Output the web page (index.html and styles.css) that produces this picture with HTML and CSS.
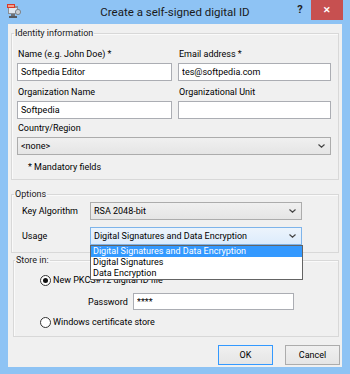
FILE: index.html
```html
<!DOCTYPE html>
<html lang="en">
<head>
    <meta charset="UTF-8">
    <title>Create a self-signed digital ID</title>
    <link rel="stylesheet" href="styles.css">
</head>
<body>
    <div class="window">
        <div class="titlebar">
            <svg class="app-icon" width="14" height="14" viewBox="0 0 14 14">
                <rect x="1" y="2" width="10" height="8" fill="#8a8f96"/>
                <rect x="2" y="4" width="8" height="5" fill="#dfe6ee"/>
                <rect x="0" y="0" width="8" height="4" fill="#d83a2a"/>
                <rect x="1" y="1" width="6" height="2" fill="#f2a08c"/>
                <rect x="4" y="10" width="4" height="2" fill="#6d7178"/>
                <rect x="2" y="12" width="8" height="2" fill="#55595f"/>
                <circle cx="11" cy="8" r="2.6" fill="#c9ced4" stroke="#7d838b" stroke-width="1"/>
            </svg>
            <div class="title">Create a self-signed digital ID</div>
            <div class="help">?</div>
            <div class="close">&#x2715;</div>
        </div>

        <div class="client">
            <fieldset class="group identity">
                <legend>Identity information</legend>
                <div class="group-body">
                    <div class="grid">
                        <div class="field">
                            <label>Name (e.g. John Doe) *</label>
                            <input type="text" value="Softpedia Editor">
                        </div>
                        <div class="field">
                            <label>Email address *</label>
                            <input type="text" value="tes@softpedia.com">
                        </div>
                        <div class="field">
                            <label>Organization Name</label>
                            <input type="text" value="Softpedia">
                        </div>
                        <div class="field">
                            <label>Organizational Unit</label>
                            <input type="text" value="">
                        </div>
                        <div class="field wide">
                            <label>Country/Region</label>
                            <div class="combo">
                                <span>&lt;none&gt;</span>
                                <svg class="arrow" width="7" height="4" viewBox="0 0 7 4"><path d="M0.5 0.5 L3.5 3.2 L6.5 0.5" fill="none" stroke="#444" stroke-width="1.2"/></svg>
                            </div>
                        </div>
                    </div>
                    <div class="note">* Mandatory fields</div>
                </div>
            </fieldset>

            <fieldset class="group options">
                <legend>Options</legend>
                <div class="group-body">
                    <div class="row">
                        <label class="row-label">Key Algorithm</label>
                        <div class="combo">
                            <span>RSA 2048-bit</span>
                            <svg class="arrow" width="7" height="4" viewBox="0 0 7 4"><path d="M0.5 0.5 L3.5 3.2 L6.5 0.5" fill="none" stroke="#444" stroke-width="1.2"/></svg>
                        </div>
                    </div>
                    <div class="row">
                        <label class="row-label">Usage</label>
                        <div class="combo-wrap">
                            <div class="combo focus">
                                <span>Digital Signatures and Data Encryption</span>
                                <svg class="arrow" width="7" height="4" viewBox="0 0 7 4"><path d="M0.5 0.5 L3.5 3.2 L6.5 0.5" fill="none" stroke="#444" stroke-width="1.2"/></svg>
                            </div>
                            <ul class="dropdown">
                                <li class="selected">Digital Signatures and Data Encryption</li>
                                <li>Digital Signatures</li>
                                <li>Data Encryption</li>
                            </ul>
                        </div>
                    </div>
                </div>
            </fieldset>

            <fieldset class="group store">
                <legend>Store in:</legend>
                <div class="group-body">
                    <div class="radio-row">
                        <span class="radio checked"></span>
                        <span>New PKCS#12 digital ID file</span>
                    </div>
                    <div class="password-row">
                        <label>Password</label>
                        <input type="text" value="****">
                    </div>
                    <div class="radio-row">
                        <span class="radio"></span>
                        <span>Windows certificate store</span>
                    </div>
                </div>
            </fieldset>

            <div class="buttons">
                <button class="default">OK</button>
                <button>Cancel</button>
            </div>
        </div>
    </div>
</body>
</html>
```

FILE: styles.css
```css
body {
    margin: 0;
    font-family: Roboto, "Noto Sans", sans-serif;
    font-size: 9px;
    color: #000;
}
.window {
    width: 350px;
    height: 374px;
    background-color: #8ec3f4;
    display: flex;
    flex-direction: column;
}
.titlebar {
    height: 24px;
    display: flex;
    align-items: flex-start;
    position: relative;
}
.app-icon {
    margin: 4px 0 0 7px;
}
.title {
    position: absolute;
    left: 0;
    right: 0;
    top: 5px;
    text-align: center;
    font-size: 11.5px;
    color: #1a1a1a;
    pointer-events: none;
}
.help {
    margin: 3px 0 0 auto;
    width: 22px;
    text-align: center;
    font-size: 11px;
    font-weight: bold;
    color: #222;
}
.close {
    margin-right: 7px;
    width: 32px;
    height: 20px;
    background-color: #c75050;
    color: #fff;
    font-size: 9px;
    font-weight: bold;
    display: flex;
    align-items: center;
    justify-content: center;
}

.client {
    margin: 0 8px;
    height: 343px;
    background-color: #f0f0f0;
    display: flex;
    flex-direction: column;
}

.group {
    margin: 0 3px;
    padding: 0;
    border: 1px solid #d8d8d8;
    box-shadow: inset 1px 1px 0 #fafafa;
}
.group legend {
    margin-left: 2px;
    padding: 0 1px;
    line-height: 14px;
    color: #1a1a1a;
}
.identity {
    margin-top: 2px;
}
.identity .group-body {
    padding: 7px 7px 5px 5px;
}
.grid {
    display: grid;
    grid-template-columns: 155px 1fr;
    column-gap: 6px;
    row-gap: 4px;
}
.field {
    display: flex;
    flex-direction: column;
    gap: 2px;
}
.field label {
    line-height: 14px;
    padding-left: 1px;
}
.field.wide {
    grid-column: 1 / 3;
    margin-top: -2px;
}
input {
    box-sizing: border-box;
    height: 18px;
    margin: 0;
    padding: 0 3px;
    border: 1px solid #abadb3;
    background: #fff;
    font-family: inherit;
    font-size: 9px;
    color: #000;
    outline: none;
}
.combo {
    box-sizing: border-box;
    height: 18px;
    padding: 0 5px 0 3px;
    border: 1px solid #acacac;
    background: linear-gradient(#f0f0f0, #e5e5e5);
    display: flex;
    align-items: center;
    justify-content: space-between;
}
.combo.focus {
    border-color: #7eb4ea;
    background: linear-gradient(#ecf4fc, #dcecfc);
}
.note {
    margin: 5px 0 0 11px;
    line-height: 14px;
}

.options {
    margin-top: 7px;
}
.options .group-body {
    padding: 1px 0 7px 0;
}
.row {
    display: flex;
    align-items: center;
    margin-bottom: 7px;
}
.row:last-child {
    margin-bottom: 0;
}
.row-label {
    box-sizing: border-box;
    width: 78px;
    padding-left: 10px;
}
.row .combo,
.combo-wrap {
    width: 212px;
}
.combo-wrap {
    position: relative;
}
.combo-wrap .combo {
    width: 100%;
}
.dropdown {
    position: absolute;
    left: 0;
    top: 18px;
    width: 213px;
    margin: 0;
    padding: 0;
    list-style: none;
    background: #fff;
    border: 1px solid #646464;
    box-sizing: border-box;
    z-index: 2;
}
.dropdown li {
    height: 11px;
    line-height: 11px;
    padding-left: 2px;
}
.dropdown .selected {
    background-color: #3399ff;
    color: #fff;
}

.store {
    margin: 0 3px 0 5px;
}
.store legend {
    margin-left: 1px;
}
.store .group-body {
    padding: 6px 0 7px 26px;
}
.radio-row {
    display: flex;
    align-items: center;
    gap: 2px;
    line-height: 14px;
}
.radio {
    box-sizing: border-box;
    width: 11px;
    height: 11px;
    border: 1px solid #333;
    border-radius: 50%;
    background: #fff;
    display: flex;
    align-items: center;
    justify-content: center;
}
.radio.checked::after {
    content: "";
    width: 5px;
    height: 5px;
    border-radius: 50%;
    background: #111;
}
.password-row {
    display: flex;
    align-items: center;
    margin: 6px 0 5px 48px;
}
.password-row label {
    width: 45px;
}
.password-row input {
    width: 161px;
    height: 17px;
}

.buttons {
    margin: 8px 2px 0 0;
    display: flex;
    justify-content: flex-end;
    gap: 12px;
}
button {
    width: 55px;
    height: 20px;
    padding: 0;
    border: 1px solid #acacac;
    background: linear-gradient(#f0f0f0, #e5e5e5);
    font-family: inherit;
    font-size: 9px;
    color: #000;
}
button.default {
    border-color: #3399ff;
}
```
